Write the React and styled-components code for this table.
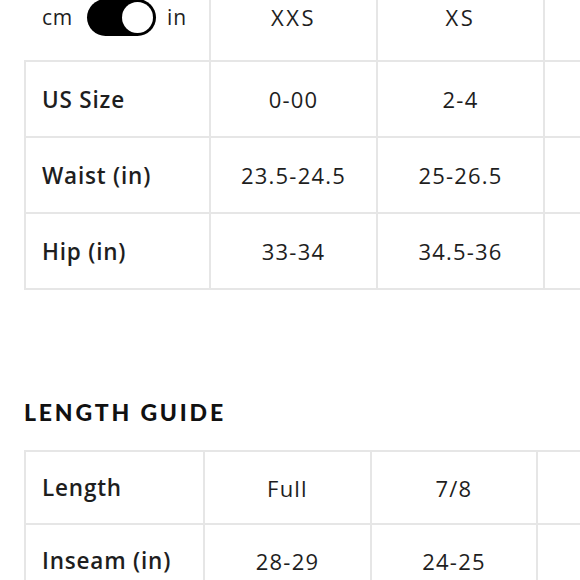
import React from "react";
import styled, { createGlobalStyle } from "styled-components";

const GlobalStyle = createGlobalStyle`
  html, body {
    margin: 0;
    padding: 0;
    background: #ffffff;
    overflow: hidden;
  }
  body {
    font-family: "Open Sans", "Lato", sans-serif;
    color: #1e1e1e;
  }
`;

const sizeColumns = ["XXS", "XS", ""];
const sizeRows = [
  { label: "US Size", values: ["0-00", "2-4", ""] },
  { label: "Waist (in)", values: ["23.5-24.5", "25-26.5", ""] },
  { label: "Hip (in)", values: ["33-34", "34.5-36", ""] },
];

const lengthRows = [
  { label: "Length", values: ["Full", "7/8", ""] },
  { label: "Inseam (in)", values: ["28-29", "24-25", ""] },
];

const App = () => {
  return (
    <>
      <GlobalStyle />
      <Page>
        <Table $cols="187px 167px 167px 167px">
          <Cell $head $first $noLeft>
            <UnitLabel>cm</UnitLabel>
            <Toggle>
              <Knob />
            </Toggle>
            <UnitLabel>in</UnitLabel>
          </Cell>
          {sizeColumns.map((c, i) => (
            <Cell key={i} $head>
              <Value $wide>{c}</Value>
            </Cell>
          ))}
          {sizeRows.map((row) => (
            <React.Fragment key={row.label}>
              <Cell $first $h={76}>
                <Label>{row.label}</Label>
              </Cell>
              {row.values.map((v, i) => (
                <Cell key={i} $h={76}>
                  <Value>{v}</Value>
                </Cell>
              ))}
            </React.Fragment>
          ))}
        </Table>

        <Heading>LENGTH GUIDE</Heading>

        <Table $cols="181px 167px 166px 167px" $top>
          {lengthRows.map((row) => (
            <React.Fragment key={row.label}>
              <Cell $first $h={73}>
                <Label>{row.label}</Label>
              </Cell>
              {row.values.map((v, i) => (
                <Cell key={i} $h={73}>
                  <Value>{v}</Value>
                </Cell>
              ))}
            </React.Fragment>
          ))}
        </Table>
      </Page>
    </>
  );
};

export default App;

const line = "#e6e6e6";

const Page = styled.div`
  padding-left: 24px;
  width: 900px;
`;

const Table = styled.div`
  display: grid;
  grid-template-columns: ${(p) => p.$cols};
  border-top: ${(p) => (p.$top ? `2px solid ${line}` : "none")};
`;

const Cell = styled.div`
  box-sizing: border-box;
  height: ${(p) => (p.$head ? 62 : p.$h)}px;
  display: flex;
  align-items: center;
  justify-content: ${(p) => (p.$first ? "flex-start" : "center")};
  padding-left: ${(p) => (p.$first ? "16px" : "0")};
  padding-bottom: ${(p) => (p.$head ? "26px" : "0")};
  border-right: 2px solid ${line};
  border-bottom: 2px solid ${line};
  border-left: ${(p) => (p.$first && !p.$noLeft ? `2px solid ${line}` : "none")};
  ${(p) => p.$noLeft && "padding-left: 18px;"}
`;

const Label = styled.span`
  font-size: 22.5px;
  font-weight: 600;
  letter-spacing: 0.8px;
  color: #1e1e1e;
`;

const Value = styled.span`
  font-size: 22px;
  font-weight: 400;
  letter-spacing: ${(p) => (p.$wide ? "2.5px" : "1.2px")};
  color: #1e1e1e;
`;

const UnitLabel = styled.span`
  font-size: 21px;
  font-weight: 400;
  letter-spacing: 0.8px;
  color: #1e1e1e;
`;

const Toggle = styled.div`
  box-sizing: border-box;
  width: 69px;
  height: 37px;
  margin: 0 11px 0 14px;
  border-radius: 19px;
  background: #000;
  display: flex;
  justify-content: flex-end;
  align-items: center;
  padding: 3px;
`;

const Knob = styled.div`
  width: 31px;
  height: 31px;
  border-radius: 50%;
  background: #fff;
`;

const Heading = styled.h2`
  margin: 110px 0 26px;
  font-family: "Lato", sans-serif;
  font-size: 23px;
  font-weight: 900;
  letter-spacing: 2.8px;
  line-height: 24px;
  color: #111;
`;
